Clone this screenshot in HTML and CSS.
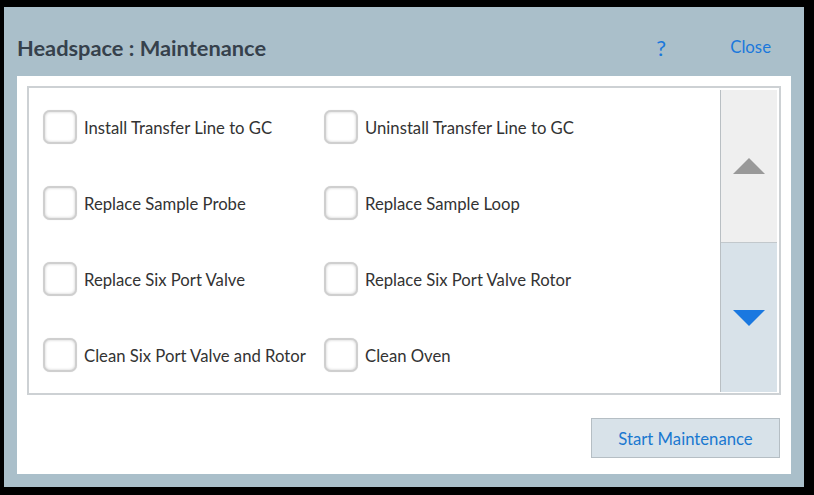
FILE: index.html
```html
<!DOCTYPE html>
<html>
<head>
<meta charset="utf-8">
<link rel="stylesheet" href="styles.css">
</head>
<body>
<div class="dialog">
  <div class="header">
    <div class="title">Headspace : Maintenance</div>
    <div class="help">?</div>
    <div class="close">Close</div>
  </div>
  <div class="content">
    <div class="listbox">
      <div class="grid">
        <label class="item"><span class="cb"></span><span class="lbl">Install Transfer Line to GC</span></label>
        <label class="item"><span class="cb"></span><span class="lbl">Uninstall Transfer Line to GC</span></label>
        <label class="item"><span class="cb"></span><span class="lbl">Replace Sample Probe</span></label>
        <label class="item"><span class="cb"></span><span class="lbl">Replace Sample Loop</span></label>
        <label class="item"><span class="cb"></span><span class="lbl">Replace Six Port Valve</span></label>
        <label class="item"><span class="cb"></span><span class="lbl">Replace Six Port Valve Rotor</span></label>
        <label class="item"><span class="cb"></span><span class="lbl">Clean Six Port Valve and Rotor</span></label>
        <label class="item"><span class="cb"></span><span class="lbl">Clean Oven</span></label>
      </div>
      <div class="scrollbar">
        <div class="sb-up"><span class="tri-up"></span></div>
        <div class="sb-down"><span class="tri-down"></span></div>
      </div>
    </div>
    <div class="footer">
      <button class="start">Start Maintenance</button>
    </div>
  </div>
</div>
</body>
</html>
```

FILE: styles.css
```css
html, body {
  margin: 0;
  padding: 0;
  background: #000;
}
body {
  width: 814px;
  height: 495px;
  overflow: hidden;
  font-family: Lato, "Noto Sans", sans-serif;
}
.dialog {
  margin: 7px 0 0 4px;
  width: 800px;
  height: 480px;
  background: #aabfca;
  box-sizing: border-box;
  padding: 0 13px 13px 13px;
  display: flex;
  flex-direction: column;
}
.header {
  height: 69px;
  display: flex;
  align-items: center;
  padding-top: 11px;
  box-sizing: border-box;
}
.title {
  font-weight: 700;
  font-size: 21.8px;
  color: #36414c;
  flex: 1;
}
.help {
  color: #1a78dc;
  font-size: 22px;
  width: 74px;
}
.close {
  color: #1a78dc;
  font-size: 16.8px;
  margin-right: 20px;
  padding-bottom: 1px;
}
.content {
  flex: 1;
  background: #fff;
  padding: 10px 10px 0 10px;
  display: flex;
  flex-direction: column;
}
.listbox {
  height: 309px;
  box-sizing: border-box;
  border: 2px solid #cdd1d4;
  padding: 2px 2px 1px 0;
  display: flex;
}
.grid {
  flex: 1;
  display: grid;
  grid-template-columns: 281px 1fr;
  grid-auto-rows: 34px;
  row-gap: 42px;
  padding: 20px 0 0 14px;
}
.item {
  display: flex;
  align-items: center;
  gap: 7px;
}
.cb {
  width: 34px;
  height: 34px;
  box-sizing: border-box;
  border: 2px solid #cfcfcf;
  border-radius: 7px;
  box-shadow: inset 0 0 3px rgba(0,0,0,0.2), 0 0 1px rgba(0,0,0,0.15);
  background: #fff;
  flex: none;
}
.lbl {
  font-size: 16.7px;
  color: #333;
  padding-top: 2px;
}
.scrollbar {
  width: 56px;
  border-left: 1px solid #b9bfc3;
  display: flex;
  flex-direction: column;
}
.sb-up {
  height: 152px;
  background: #efefef;
  border-bottom: 1px solid #c2c8cc;
  display: flex;
  align-items: center;
  justify-content: center;
}
.sb-down {
  flex: 1;
  background: #d8e2e9;
  display: flex;
  align-items: center;
  justify-content: center;
}
.tri-up {
  width: 0;
  height: 0;
  border-left: 16px solid transparent;
  border-right: 16px solid transparent;
  border-bottom: 16px solid #999;
}
.tri-down {
  width: 0;
  height: 0;
  border-left: 16px solid transparent;
  border-right: 16px solid transparent;
  border-top: 16px solid #1a78e0;
}
.footer {
  display: flex;
  justify-content: flex-end;
  padding-top: 23px;
  padding-right: 1px;
}
.start {
  width: 189px;
  height: 40px;
  background: #d8e2e9;
  border: 1px solid #b5bec4;
  color: #1a78d0;
  font-family: Lato, "Noto Sans", sans-serif;
  font-size: 16.7px;
  padding: 2px 0 0 0;
}
```
